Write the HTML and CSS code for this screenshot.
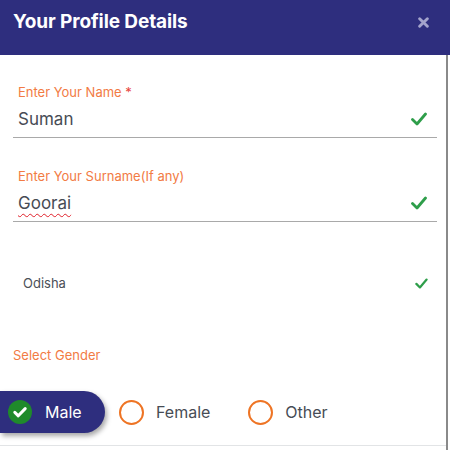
FILE: index.html
```html
<!DOCTYPE html>
<html>
<head>
<meta charset="utf-8">
<link rel="stylesheet" href="styles.css">
</head>
<body>
<div class="modal">
  <header class="header">
    <h1 class="title">Your Profile Details</h1>
    <svg class="close" viewBox="0 0 10 10" width="11" height="11"><path d="M1.5 1.5 L8.5 8.5 M8.5 1.5 L1.5 8.5" stroke="#a4a4cc" stroke-width="2.6" stroke-linecap="round"/></svg>
  </header>
  <main class="body">
    <div class="field field-name">
      <label class="label">Enter Your Name <span class="req">*</span></label>
      <div class="input-row">
        <span class="value">Suman</span>
        <svg class="check" viewBox="0 0 16 14" width="16" height="14"><path d="M1.5 7.5 L6 12 L14.5 2" fill="none" stroke="#2e9e4a" stroke-width="2.8" stroke-linecap="round" stroke-linejoin="round"/></svg>
      </div>
    </div>
    <div class="field field-surname">
      <label class="label">Enter Your Surname(If any)</label>
      <div class="input-row">
        <span class="value spell">Goorai</span>
        <svg class="check" viewBox="0 0 16 14" width="16" height="14"><path d="M1.5 7.5 L6 12 L14.5 2" fill="none" stroke="#2e9e4a" stroke-width="2.8" stroke-linecap="round" stroke-linejoin="round"/></svg>
      </div>
    </div>
    <div class="state-row">
      <span class="state">Odisha</span>
      <svg class="check small" viewBox="0 0 16 14" width="13" height="11"><path d="M1.5 7.5 L6 12 L14.5 2" fill="none" stroke="#2e9e4a" stroke-width="2.8" stroke-linecap="round" stroke-linejoin="round"/></svg>
    </div>
    <div class="gender-label">Select Gender</div>
    <div class="gender-row">
      <div class="opt selected">
        <span class="tick"><svg viewBox="0 0 24 24" width="24" height="24"><circle cx="12" cy="12" r="12" fill="#1f8a2b"/><path d="M6.8 12.4 L10.3 15.8 L17.2 8.6" fill="none" stroke="#fff" stroke-width="3" stroke-linecap="round" stroke-linejoin="round"/></svg></span>
        <span class="opt-text">Male</span>
      </div>
      <div class="opt">
        <span class="radio"></span>
        <span class="opt-text">Female</span>
      </div>
      <div class="opt">
        <span class="radio"></span>
        <span class="opt-text">Other</span>
      </div>
    </div>
  </main>
</div>
</body>
</html>
```
FILE: styles.css
```css
html, body {
  margin: 0;
  padding: 0;
  background: #fff;
}
body {
  font-family: Inter, "Noto Sans", sans-serif;
  width: 450px;
  height: 450px;
  overflow: hidden;
}
.modal {
  width: 450px;
}
.header {
  background: #2e2e7e;
  height: 55px;
  display: flex;
  align-items: flex-start;
  justify-content: space-between;
  padding: 0 21px 0 13px;
  box-sizing: border-box;
}
.title {
  margin: 10px 0 0;
  color: #fff;
  font-size: 19px;
  font-weight: 700;
  letter-spacing: -0.1px;
  line-height: 24px;
}
.close {
  display: block;
  margin-top: 17px;
}
.body {
  width: 448px;
  border-right: 2px solid #8a8a8a;
  height: 395px;
  box-sizing: border-box;
  padding: 0 9px 0 13px;
  position: relative;
}
.field {
  border-bottom: 1px solid #a9a9a9;
}
.field-name {
  padding-top: 29px;
}
.field-surname {
  margin-top: 30px;
}
.label {
  display: block;
  color: #f27b44;
  font-size: 13px;
  line-height: 16px;
  padding-left: 5px;
}
.req {
  color: #e8453c;
}
.input-row {
  display: flex;
  align-items: center;
  justify-content: space-between;
  height: 37px;
  padding: 0 10px 0 5px;
}
.value {
  font-size: 17px;
  color: #474c55;
  line-height: 22px;
}
.spell {
  text-decoration: underline wavy #e0202a;
  text-decoration-thickness: 1px;
  text-underline-offset: 4px;
}
.check {
  display: block;
}
.state-row {
  display: flex;
  align-items: center;
  justify-content: space-between;
  height: 18px;
  margin-top: 52px;
  padding: 0 9px 0 10px;
}
.state {
  font-size: 13px;
  color: #4b4f57;
}
.gender-label {
  margin-top: 55px;
  color: #f27b44;
  font-size: 13px;
  line-height: 16px;
}
.gender-row {
  display: flex;
  align-items: center;
  margin: 28px 0 0 -13px;
  height: 42px;
}
.opt {
  display: flex;
  align-items: center;
  height: 42px;
}
.opt.selected {
  background: #2e2e7e;
  border-radius: 0 21px 21px 0;
  width: 105px;
  padding-left: 8px;
  box-sizing: border-box;
  box-shadow: 2px 3px 5px rgba(0, 0, 0, 0.35);
  margin-right: 14px;
}
.tick {
  display: block;
  width: 24px;
  height: 24px;
}
.tick svg {
  display: block;
}
.opt.selected .opt-text {
  color: #fff;
  margin-left: 13px;
}
.opt-text {
  font-size: 16px;
  color: #474c55;
}
.radio {
  width: 21px;
  height: 21px;
  border: 2px solid #ee7424;
  border-radius: 50%;
  margin-right: 12px;
}
.opt + .opt + .opt {
  margin-left: 38px;
}
.body::after {
  content: "";
  position: absolute;
  left: 0;
  right: 0;
  bottom: 4px;
  border-bottom: 1px solid #e2e4e6;
}
```
